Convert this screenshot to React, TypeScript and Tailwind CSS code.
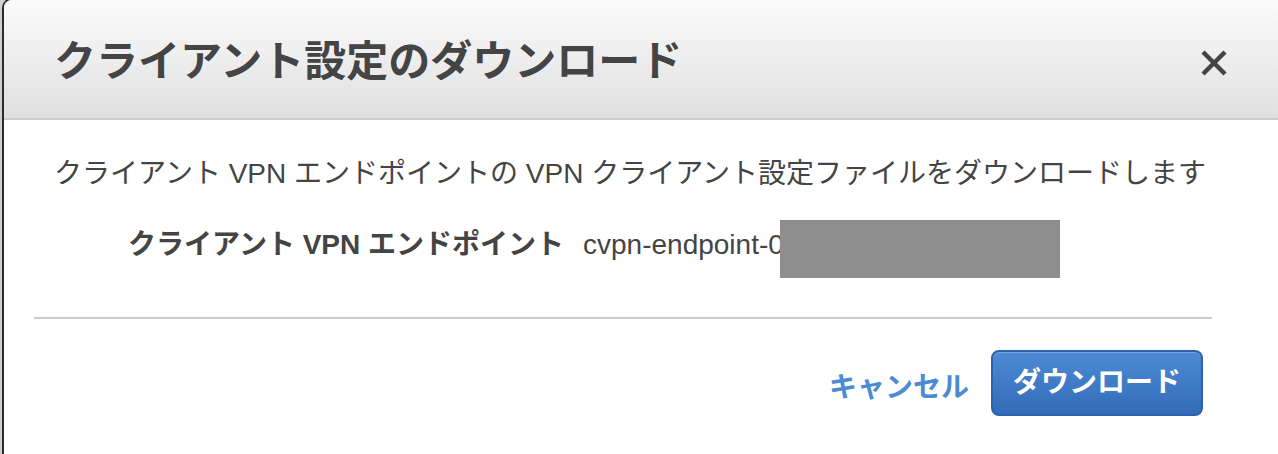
import React from "react";

const jp = { fontFamily: '"Liberation Sans", "Noto Sans CJK JP", sans-serif' };

export default function App() {
  return (
    <div className="w-[1278px] h-[454px] overflow-hidden bg-[#d0d0d0] flex" style={jp}>
      <div className="ml-[2px] -mt-[2px] flex-1 flex flex-col bg-white border-l-[2px] border-t-[2px] border-[#2a2a2a] rounded-tl-[10px] overflow-hidden">
        <div className="h-[120px] shrink-0 flex items-center justify-between pl-[50px] pr-[50px] bg-gradient-to-b from-[#fbfbfb] to-[#e0e0e0] border-b-[2px] border-[#cccccc]">
          <h1 className="text-[42px] font-bold text-[#444444] leading-none mt-[6px]">
            クライアント設定のダウンロード
          </h1>
          <svg width="28" height="28" viewBox="0 0 28 28" className="mt-[8px]">
            <path d="M3 3 L25 25 M25 3 L3 25" stroke="#444444" strokeWidth="4.5" strokeLinecap="butt" />
          </svg>
        </div>
        <div className="pl-[50px] pt-[40px]">
          <p className="text-[28px] text-[#444444] leading-none">
            クライアント VPN エンドポイントの VPN クライアント設定ファイルをダウンロードします
          </p>
          <div className="flex items-center mt-[43px] pl-[74px]">
            <span className="text-[28px] font-bold text-[#444444] leading-none">
              クライアント VPN エンドポイント
            </span>
            <span className="relative ml-[19px] text-[28px] text-[#444444] leading-none">
              cvpn-endpoint-0
              <span className="absolute left-[197px] top-[-11px] w-[280px] h-[58px] bg-[#8e8e8e]" />
            </span>
          </div>
        </div>
        <div className="mt-[58px] ml-[30px] w-[1178px] h-[2px] bg-[#cccccc]" />
        <div className="flex items-center justify-end w-[1199px] mt-[31px]">
          <button className="text-[28px] font-bold text-[#4a8bd3] leading-none mr-[22px] mt-[10px]">キャンセル</button>
          <button className="w-[212px] h-[66px] rounded-[8px] border-[2px] border-[#2d62ad] bg-gradient-to-b from-[#4d8ad5] to-[#336cb8] text-white text-[28px] font-bold leading-none shadow-[inset_0_1px_0_rgba(255,255,255,0.25)]">
            ダウンロード
          </button>
        </div>
      </div>
    </div>
  );
}
